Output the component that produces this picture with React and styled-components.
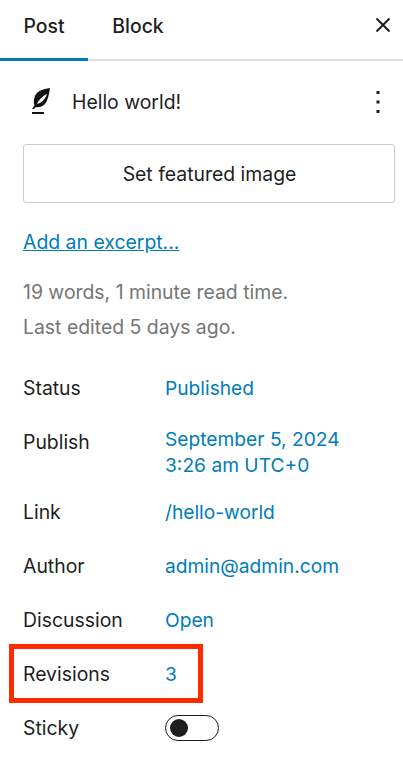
import React from "react";
import styled, { createGlobalStyle } from "styled-components";

const Global = createGlobalStyle`
  html, body { margin: 0; padding: 0; background: #fff; }
  body { font-family: Inter, "Liberation Sans", sans-serif; color: #1e1e1e; }
  * { box-sizing: border-box; }
`;
const Panel = styled.div`
  position: relative; width: 403px; height: 768px; overflow: hidden; background: #fff;
  font-size: 19.4px; line-height: 25px;
`;
const TabBar = styled.div`
  display: flex; align-items: center; height: 61px; border-bottom: 2px solid #e0e0e0;
`;
const Tab = styled.div`
  position: relative; display: flex; align-items: center; justify-content: center;
  width: ${p => p.$w}px; height: 59px; font-weight: 500; padding-bottom: 7px;
  ${p => p.$active && `&::after { content: ""; position: absolute; left: 0; right: 0; bottom: -2px; height: 3px; background: #007cba; }`}
`;
const Close = styled.div`
  margin-left: auto; margin-right: 8px; margin-bottom: 9px; display: flex;
`;
const Content = styled.div`
  padding: 0 8px 0 23px;
`;
const TitleRow = styled.div`
  display: flex; align-items: center; height: 83px; padding-left: 6px; padding-bottom: 1px;
`;
const Title = styled.div` margin-left: 19px; flex: 1; `;
const Kebab = styled.div` display: flex; margin-right: 13px; `;
const FeatureButton = styled.div`
  display: flex; align-items: center; justify-content: center;
  height: 59px; padding: 1px 0 0 1px; border: 1.5px solid #cccccc; border-radius: 3px;
`;
const ExcerptLink = styled.div`
  margin-top: 27px; color: #007cba; text-decoration: underline;
`;
const Meta = styled.div`
  margin-top: 20px; color: #757575; line-height: 35px;
`;
const Rows = styled.div`
  margin-top: 27px; display: flex; flex-direction: column; gap: 22px;
`;
const Row = styled.div`
  display: flex; align-items: ${p => p.$top ? "flex-start" : "center"};
  height: ${p => p.$top ? 48 : 32}px;
`;
const Label = styled.div` width: 142px; ${p => p.$top && "padding-top: 4px;"} `;
const Value = styled.div` color: #007cba; line-height: 26px; font-size: 19.2px; `;
const Toggle = styled.div`
  display: flex; align-items: center; width: 54px; height: 26px; padding-left: 3.5px;
  border: 1.5px solid #1e1e1e; border-radius: 13px;
`;
const Knob = styled.div` width: 18px; height: 18px; border-radius: 50%; background: #1e1e1e; `;
const Highlight = styled.div`
  position: absolute; left: 9px; top: 644px; width: 194px; height: 59px;
  border: 5px solid #ff2a00; pointer-events: none;
`;

export default function App() {
  return (
    <Panel>
      <Global />
      <TabBar>
        <Tab $w={88} $active>Post</Tab>
        <Tab $w={100}>Block</Tab>
        <Close>
          <svg width="24" height="24" viewBox="0 0 24 24"><path d="M5.5 5.5l13 13M18.5 5.5l-13 13" stroke="#1e1e1e" strokeWidth="2" fill="none" /></svg>
        </Close>
      </TabBar>
      <Content>
        <TitleRow>
          <svg width="24" height="28" viewBox="0 0 24 28">
            <path d="M21 0C14 1 8 3 6 8C4.500 12 4.500 15 5.500 17.500L3 21h1.800L7 19C12 20 16.500 17 18 12.500 19.500 8.500 20.500 4 21 0zM18 6C13.500 8 10.500 11 8 16 12.500 15 16 11.500 18 6z" fill="#111" fillRule="evenodd" />
            <rect x="3" y="24" width="12" height="2" fill="#111" />
          </svg>
          <Title>Hello world!</Title>
          <Kebab>
            <svg width="8" height="24" viewBox="0 0 8 24"><g fill="#1e1e1e"><rect x="2.500" y="1" width="3" height="3" /><rect x="2.500" y="10.500" width="3" height="3" /><rect x="2.500" y="20" width="3" height="3" /></g></svg>
          </Kebab>
        </TitleRow>
        <FeatureButton>Set featured image</FeatureButton>
        <ExcerptLink>Add an excerpt...</ExcerptLink>
        <Meta>19 words, 1 minute read time.<br />Last edited 5 days ago.</Meta>
        <Rows>
          <Row><Label>Status</Label><Value>Published</Value></Row>
          <Row $top><Label $top>Publish</Label><Value>September 5, 2024<br />3:26 am UTC+0</Value></Row>
          <Row><Label>Link</Label><Value>/hello-world</Value></Row>
          <Row><Label>Author</Label><Value>admin@admin.com</Value></Row>
          <Row><Label>Discussion</Label><Value>Open</Value></Row>
          <Row><Label>Revisions</Label><Value>3</Value></Row>
          <Row><Label>Sticky</Label><Toggle><Knob /></Toggle></Row>
        </Rows>
      </Content>
      <Highlight />
    </Panel>
  );
}
